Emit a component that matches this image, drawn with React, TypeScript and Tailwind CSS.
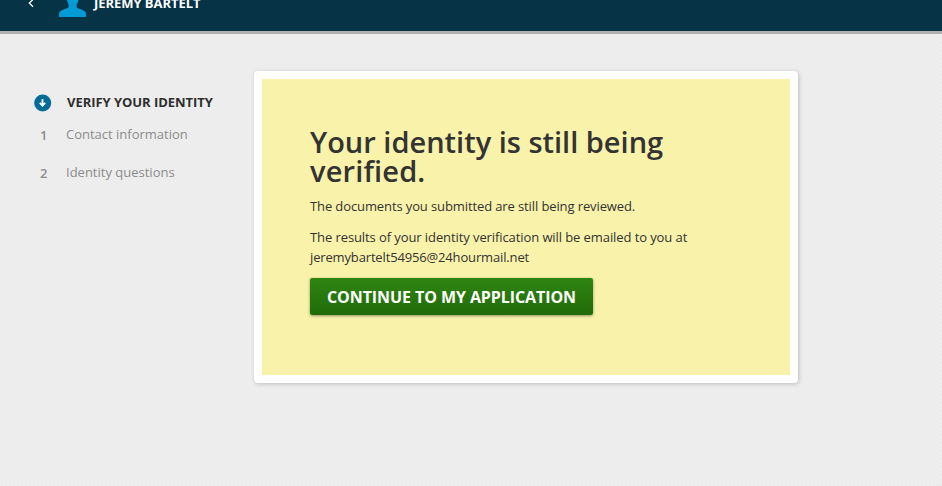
import React from 'react';

const steps = [
  { number: '1', label: 'Contact information' },
  { number: '2', label: 'Identity questions' },
];

function Header() {
  return (
    <header className="flex h-[34px] items-start overflow-hidden border-b-[3px] border-[#b0b0b0] bg-[#063345] text-white">
      <svg className="ml-[28px] h-2 w-2 shrink-0" viewBox="0 0 8 8" fill="none" stroke="currentColor" strokeWidth="1.3">
        <path d="M5 -0.5 L1.3 3 L5 6.7" />
      </svg>
      <svg className="ml-[23px] h-[17px] w-[27px] shrink-0" viewBox="0 0 27 17" fill="#039bd6">
        <path d="M8 0H19.5C19.3 2.2 17.8 3.5 17.6 5C17.4 7 17.8 7.8 19.5 8.6C23.5 10.2 27 11 27 14V17H0V14C0 11 3.5 10.2 7.5 8.6C9.4 7.8 9.8 7 9.6 5C9.4 3.5 8.2 2.2 8 0Z" />
      </svg>
      <span className="mt-[-6px] ml-[8px] text-[13px] leading-[18px] font-bold tracking-[-0.05px] whitespace-nowrap">JEREMY BARTELT</span>
    </header>
  );
}

function Sidebar() {
  return (
    <nav className="w-[254px] shrink-0 pt-[59px] pl-[34px]">
      <div className="flex h-[20px] items-center">
        <svg className="h-[18px] w-[18px] shrink-0" viewBox="0 0 18 18">
          <circle cx="8.7" cy="9" r="8.5" fill="#046b99" />
          <path d="M8.5 5V11.5M5.8 8.8L8.5 11.6L11.2 8.8" fill="none" stroke="white" strokeWidth="1.8" />
        </svg>
        <span className="ml-[15px] text-[13px] font-bold tracking-[-0.05px] whitespace-nowrap text-[#2e2e2e]">VERIFY YOUR IDENTITY</span>
      </div>
      <ol className="mt-[11px] flex flex-col gap-[18px] text-[13px] leading-[20px] text-[#8c8c8c]">
        {steps.map((step) => (
          <li key={step.number} className="flex h-[20px] pl-[6px]">
            <span className="w-[26px] pt-px font-semibold">{step.number}</span>
            <span>{step.label}</span>
          </li>
        ))}
      </ol>
    </nav>
  );
}

export default function App() {
  return (
    <div className="h-[486px] w-[942px] overflow-hidden bg-[#ededed] bg-[repeating-linear-gradient(45deg,#efefef_0px,#efefef_1.414px,#ebebeb_1.414px,#ebebeb_2.828px)] font-['Open_Sans',sans-serif] text-[#333333]">
      <Header />
      <div className="flex">
        <Sidebar />
        <main className="mt-[37px] h-[312px] w-[544px] rounded-[4px] bg-white p-2 shadow-[1px_1px_4px_rgba(0,0,0,0.2)]">
          <section className="h-full bg-[#f9f2aa] px-12 pt-[48px]">
            <h1 className="text-[29px] leading-[29px] font-semibold">
              Your identity is still being
              <br />
              <span className="tracking-[0.15px]">verified.</span>
            </h1>
            <p className="mt-[11px] text-[13px] leading-[20px] tracking-[-0.11px]">The documents you submitted are still being reviewed.</p>
            <p className="mt-[11px] text-[13px] leading-[20px] tracking-[-0.09px]">
              The results of your identity verification will be emailed to you at
              <br />
              <span className="tracking-[-0.15px]">jeremybartelt54956@24hourmail.net</span>
            </p>
            <button className="mt-[11px] flex h-[37px] w-[283px] items-center justify-center rounded-[2px] bg-linear-to-b from-[#2e8511] to-[#216b09] text-[16px] font-bold tracking-[-0.08px] whitespace-nowrap text-white shadow-[0_1px_3px_rgba(0,0,0,0.4)]">
              CONTINUE TO MY APPLICATION
            </button>
          </section>
        </main>
      </div>
    </div>
  );
}
